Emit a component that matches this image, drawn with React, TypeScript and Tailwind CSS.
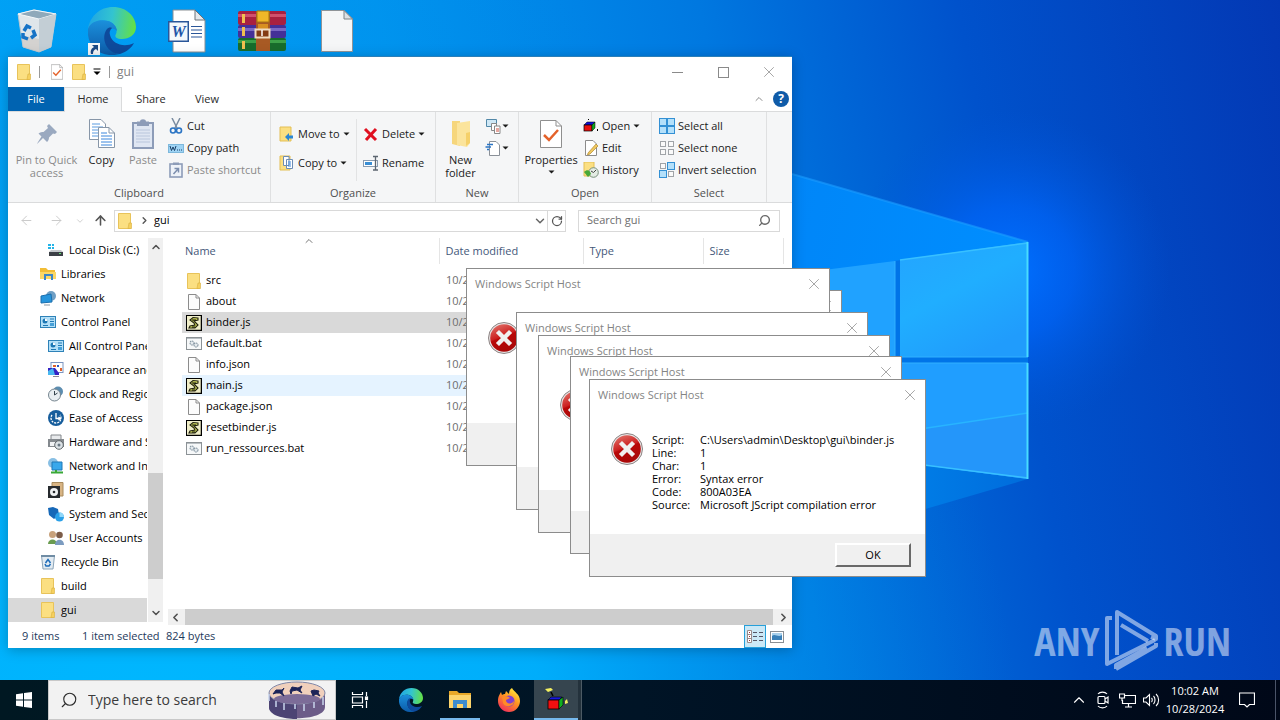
import React from 'react'
import { ArrowLeft, ArrowRight, ArrowUp, ChevronDown, ChevronLeft, ChevronRight, ChevronUp, RotateCw, Search, X } from 'lucide-react'

type IconProps = { className?: string }

/* ---------- wallpaper ---------- */

const Wallpaper = () => (
  <svg
    className="absolute inset-0 h-full w-full"
    viewBox="0 0 1280 680"
    preserveAspectRatio="xMidYMid slice"
    aria-hidden="true"
  >
    <defs>
      <linearGradient id="sky" x1="0" y1="0.1" x2="1" y2="0">
        <stop offset="0" stopColor="#00a6f8" />
        <stop offset="0.3" stopColor="#0096f0" />
        <stop offset="0.55" stopColor="#0078e0" />
        <stop offset="0.75" stopColor="#0052cc" />
        <stop offset="1" stopColor="#0338b4" />
      </linearGradient>
      <radialGradient id="floor" gradientUnits="userSpaceOnUse" cx="160" cy="760" r="860">
        <stop offset="0" stopColor="#00b8ff" />
        <stop offset="0.45" stopColor="#00b0fc" stopOpacity="0.9" />
        <stop offset="1" stopColor="#0080e0" stopOpacity="0" />
      </radialGradient>
      <radialGradient id="glow" gradientUnits="userSpaceOnUse" cx="1010" cy="270" r="160">
        <stop offset="0" stopColor="#0070ff" />
        <stop offset="0.4" stopColor="#0066fa" stopOpacity="0.7" />
        <stop offset="1" stopColor="#0056d8" stopOpacity="0" />
      </radialGradient>
      <linearGradient id="beam" x1="0" y1="0" x2="1" y2="0.3">
        <stop offset="0" stopColor="#0086f8" />
        <stop offset="1" stopColor="#008eff" />
      </linearGradient>
      <linearGradient id="beamLow" x1="0" y1="0" x2="1" y2="0">
        <stop offset="0" stopColor="#0088ec" />
        <stop offset="0.55" stopColor="#007ce6" />
        <stop offset="1" stopColor="#006cdc" />
      </linearGradient>
      <linearGradient id="pane" x1="0" y1="0" x2="0.6" y2="1">
        <stop offset="0" stopColor="#24a4ff" />
        <stop offset="0.5" stopColor="#20aeff" />
        <stop offset="1" stopColor="#209cfc" />
      </linearGradient>
    </defs>
    <rect width="1280" height="680" fill="url(#sky)" />
    <rect width="1280" height="680" fill="url(#floor)" />
    <rect x="820" y="80" width="400" height="400" fill="url(#glow)" />
    <path d="M792 174 L1028 242 V479 L792 445Z" fill="url(#beam)" />
    <path d="M792 548 L1028 479 L792 445Z" fill="url(#beamLow)" />
    <path d="M792 174 L1028 242" stroke="#1c9cff" strokeWidth="2" opacity=".6" />
    <path d="M894 261 V462 L902 463 V260Z M792 357 H1028 V364 H792Z" fill="#0074e8" />
    <path d="M792 274 L895 261 V357 H792Z" fill="#20a2ff" />
    <path d="M900 260 L1028 242 V357 H900Z" fill="url(#pane)" />
    <path d="M792 363 H895 V461 L792 447Z" fill="#209cfc" />
    <path d="M900 363 H1028 V479 L900 462Z" fill="#209eff" />
    <path d="M900 432 L1028 413 V479 L900 462Z" fill="#2496fa" />
    <path d="M900 432 L1028 413" stroke="#28b4ff" strokeWidth="1.5" />
    <path d="M900 260 L1028 243 M900 462 L1028 478" stroke="#38c0ff" strokeWidth="1.5" />
    <path d="M900 357 H1028 M900 363 H1028 M895 261 V357" stroke="#30b0ff" strokeWidth="1" />
    <path d="M1027.500 242 V357 M1027.500 363 V479" stroke="#48dcff" strokeWidth="2" />
  </svg>
)

/* ---------- desktop icons ---------- */

const RecycleBinLarge = () => (
  <svg viewBox="0 0 40 44" className="h-11 w-10">
    <path d="M1 5 L17 1 L39 5 L34 38 L22 43 L6 38Z" fill="#dfe6ea" stroke="#b9c8d2" />
    <path d="M1 5 L17 1 L39 5 L22 10Z" fill="#8fa9ba" stroke="#f4f8fa" />
    <path d="M22 10 L39 5 L34 38 L22 43Z" fill="#c3ced5" />
    <path d="M4 26 L6 38 L22 43 V30Z" fill="#cfc9c4" opacity=".7" />
    <g fill="none" stroke="#1673c6" strokeWidth="3.500">
      <path d="M7 22 L10 17 L14 19" />
      <path d="M16 21 L18 26 L14 29" />
      <path d="M11 30 L6 28 L6 24" />
    </g>
  </svg>
)

const EdgeLogo = ({ className }: IconProps) => (
  <svg viewBox="0 0 48 48" className={className}>
    <defs>
      <linearGradient id="edgeTop" x1="0" y1="0.3" x2="1" y2="0.4">
        <stop offset="0" stopColor="#1fa4e4" />
        <stop offset="0.5" stopColor="#33c4d0" />
        <stop offset="1" stopColor="#64e046" />
      </linearGradient>
      <linearGradient id="edgeLeft" x1="0" y1="0" x2="0" y2="1">
        <stop offset="0" stopColor="#1b90dc" />
        <stop offset="1" stopColor="#0c5aa8" />
      </linearGradient>
    </defs>
    <path d="M0 22 C2 9 12 0 25 0 C39 0 48 10 48 20 C48 28 41 32 34 32 C29 32 26 30 28 27 C30 23 27 16 20 14 C12 12 4 15 0 22Z" fill="url(#edgeTop)" />
    <path d="M0 22 C3 14 12 12 20 14 C25 15 29 20 29 24 C26 20 18 20 17 29 C16 39 24 46 32 47 C14 52 -2 40 0 22Z" fill="url(#edgeLeft)" />
    <path d="M19 22 C12 31 19 47 32 47 C39 45 44 40 46 36 C36 41 24 37 22 28 C21 25 22 23 24 21 C22 20 20 21 19 22Z" fill="#0e4a9c" />
  </svg>
)

const EdgeShortcut = () => (
  <div className="relative">
    <EdgeLogo className="h-12 w-12" />
    <svg viewBox="0 0 12 12" className="absolute bottom-0 left-0 h-3 w-3">
      <rect width="12" height="12" fill="#f4f6f8" />
      <path d="M3 11 C2 7 4 5 6 4 L4 2 H10 V8 L8 6 C6 7 5 8 5 11Z" fill="#1c4a86" />
    </svg>
  </div>
)

const WordDocument = () => (
  <svg viewBox="0 0 38 44" className="h-11 w-[38px]">
    <path d="M5 1 H27 L37 11 V43 H5Z" fill="#fff" stroke="#8a8f94" />
    <path d="M27 1 V11 H37Z" fill="#e4e8ec" stroke="#6b7278" />
    <path d="M23 17.500 H34 M23 21 H34 M23 24.500 H34 M23 28 H34" stroke="#2a5699" strokeWidth="1.2" />
    <rect x="0.750" y="12.750" width="19.500" height="19.500" fill="#f4f8fc" stroke="#2a5699" strokeWidth="1.500" />
    <text x="10.500" y="28" textAnchor="middle" fontSize="16" fontWeight="700" fontStyle="italic" fontFamily="Liberation Serif, serif" fill="#1e55a8">W</text>
  </svg>
)

const WinRar = () => (
  <svg viewBox="0 0 48 42" className="h-[42px] w-12">
    <rect x="0" y="1" width="48" height="14" rx="2" fill="#a82040" />
    <path d="M0 4 H48 V7 H0Z" fill="#d0506c" />
    <rect x="0" y="15" width="48" height="13" rx="2" fill="#443098" />
    <path d="M0 18 H48 V21 H0Z" fill="#7a68c4" />
    <rect x="0" y="28" width="48" height="13" rx="2" fill="#186c2c" />
    <path d="M0 30 H48 V33 H0Z" fill="#3ca048" />
    <path d="M4 4 H7 V13 H4Z M4 17 H7 V26 H4Z M4 31 H7 V39 H4Z" fill="#f0c050" />
    <path d="M18 1 H32 V41 H18Z" fill="#a85a24" />
    <path d="M19 1 H31 V12 H19Z" fill="#f0b828" stroke="#a87410" />
    <path d="M20 14 H30 V20 H20Z" fill="#d89020" />
    <rect x="17.500" y="19.500" width="14" height="8" fill="#843c14" stroke="#f0dcc0" strokeWidth="2" />
    <path d="M24 20 V26" stroke="#fff" strokeWidth="1.500" />
  </svg>
)

const BlankDocument = () => (
  <svg viewBox="0 0 32 42" className="h-[42px] w-8">
    <path d="M0.500 0.500 H23 L31.500 9 V41.500 H0.500Z" fill="#f5f6f7" stroke="#8f9498" />
    <path d="M23 0.500 V9 H31.500Z" fill="#dde1e4" stroke="#7c8286" />
  </svg>
)

/* ---------- small icons ---------- */

const Svg16 = ({ children }: { children: React.ReactNode }) => (
  <svg viewBox="0 0 16 16" className="h-4 w-4 shrink-0" aria-hidden="true">
    {children}
  </svg>
)

const FolderIcon = () => (
  <Svg16>
    <path d="M1.500 0.500 H13.500 V15.500 H1.500Z" fill="#fbdf82" stroke="#e8c35a" />
    <path d="M12 10 H14.500 V15.500 H11Z" fill="#f6d05e" stroke="#d9b041" strokeWidth=".6" />
  </Svg16>
)

const FileIcon = () => (
  <Svg16>
    <path d="M2.500 0.500 H10 L13.500 4 V15.500 H2.500Z" fill="#fcfcfc" stroke="#8c8c8c" />
    <path d="M10 0.500 V4 H13.500" fill="none" stroke="#8c8c8c" />
  </Svg16>
)

const ScriptIcon = () => (
  <Svg16>
    <rect x="0.500" y="0.500" width="15" height="15" fill="#f0eec8" stroke="#000" />
    <path d="M15.500 1 V15.500 H1" fill="none" stroke="#000" strokeWidth="1.500" />
    <path d="M12 3 L7 2.500 L4 5 L8 8 L9 10 L4 11 L3 13 H9 L12 10 L8 6 L12 5Z" fill="#d8e060" stroke="#202010" strokeWidth="1.100" />
    <path d="M6 5 H10 M6 12 H9" stroke="#000" />
  </Svg16>
)

const BatIcon = () => (
  <Svg16>
    <rect x="0.500" y="1.500" width="15" height="12" fill="#f6f8f9" stroke="#8c9296" />
    <path d="M1 2.500 H15" stroke="#b8bec2" />
    <circle cx="6" cy="7" r="2" fill="#e4eaee" stroke="#8798a4" strokeWidth="1.100" strokeDasharray="1.500 .6" />
    <circle cx="10" cy="9" r="2" fill="#e4eaee" stroke="#8798a4" strokeWidth="1.100" strokeDasharray="1.500 .6" />
  </Svg16>
)

const DiskIcon = () => (
  <Svg16>
    <path d="M0 2 H3 V4 H0Z M4 2 H6 V4 H4Z M0 5 H3 V7 H0Z M4 5 H6 V7 H4Z" fill="#22b4e8" />
    <path d="M3 8 H13 L15 10 H1Z" fill="#c4c8cc" />
    <rect x="1" y="10" width="14" height="4" fill="#3c4046" />
    <rect x="11" y="11" width="2" height="1" fill="#5fe070" />
  </Svg16>
)

const LibraryIcon = () => (
  <Svg16>
    <path d="M0 2 H6 L8 4 H15 V13 H0Z" fill="#f2bd35" />
    <path d="M0 6 H16 V13 H0Z" fill="#fbd766" />
    <path d="M4 8 H13 V14 H11 V10 H6 V14 H4Z" fill="#3d86c8" />
  </Svg16>
)

const NetworkIcon = () => (
  <Svg16>
    <circle cx="11" cy="6" r="5" fill="#6f9fc4" />
    <path d="M1 6 L11 4 L12 12 L1 13Z" fill="#2795dc" stroke="#1a6fae" />
    <path d="M4 15 H10" stroke="#8a98a4" />
  </Svg16>
)

const ControlPanelIcon = () => (
  <Svg16>
    <rect x="0.500" y="2.500" width="15" height="11" fill="#b4e0f8" stroke="#2e82b8" />
    <circle cx="5" cy="7" r="2.500" fill="#1e78b4" />
    <path d="M5 7 V4.500 A2.500 2.500 0 0 1 7.500 7Z" fill="#fff" />
    <path d="M10 5 H14 M10 7.500 H14 M3 11.500 H8" stroke="#1e78b4" />
    <rect x="10" y="9" width="4" height="3" fill="#46a0d8" />
  </Svg16>
)

const AppearanceIcon = () => (
  <Svg16>
    <rect x="3" y="0.500" width="12" height="10" fill="#fff" stroke="#7a94c0" />
    <path d="M5 3 H8 V5 H5Z M12 6 H14 V9 H12Z" fill="#e06028" />
    <path d="M9 3 H11 V5 H9Z M5 6 H7 V8 H5Z" fill="#2858c8" />
    <path d="M0 6 H7 L11 11 V13 H0Z" fill="#3424c4" />
    <path d="M0 9 L5 6 L7 13 H0Z" fill="#48b8f0" />
    <path d="M5 14.500 H11" stroke="#889" />
  </Svg16>
)

const ClockIcon = () => (
  <Svg16>
    <circle cx="10" cy="5.500" r="5" fill="#5c8db0" />
    <circle cx="6.500" cy="9" r="6" fill="#e8eef2" stroke="#74848e" />
    <path d="M6.500 5 V9 L9.500 7" fill="none" stroke="#34444e" />
  </Svg16>
)

const EaseIcon = () => (
  <Svg16>
    <circle cx="8" cy="8" r="8" fill="#165d9c" />
    <path d="M4 5 A5 5 0 1 0 12 5" fill="none" stroke="#fff" strokeDasharray="2 1" strokeWidth="1.300" />
    <path d="M8 3 V8.500 H12 M10.500 7 L12.500 8.500 L10.500 10" fill="none" stroke="#fff" strokeWidth="1.300" />
  </Svg16>
)

const HardwareIcon = () => (
  <Svg16>
    <path d="M3 1 H13 V6 H3Z" fill="#e8eaec" stroke="#84888c" />
    <path d="M0 5 H16 V13 H0Z" fill="#84898e" />
    <path d="M2 8 H7 V12 H2Z" fill="#f0f2f4" />
    <circle cx="11" cy="11" r="4.300" fill="#dce2e6" stroke="#62686c" />
    <circle cx="11" cy="11" r="1.500" fill="#6a7884" />
  </Svg16>
)

const NetInternetIcon = () => (
  <Svg16>
    <circle cx="5" cy="5" r="5" fill="#88bfe4" />
    <path d="M4 4 H14 V12 H4Z" fill="#38a8ec" stroke="#1e78b8" />
    <path d="M8 12 V14 M3 14.500 H15" stroke="#38a838" strokeWidth="2" />
  </Svg16>
)

const ProgramsIcon = () => (
  <Svg16>
    <path d="M4 0.500 H15 V14 H4Z" fill="#d8b484" stroke="#a88a5c" />
    <rect x="0" y="4" width="12" height="12" fill="#262a2e" />
    <circle cx="6" cy="10" r="4" fill="#f0f2f4" />
    <circle cx="6" cy="10" r="1.300" fill="#262a2e" />
  </Svg16>
)

const SystemIcon = () => (
  <Svg16>
    <path d="M0 2 L5 1 L10 3 L11 9 L6 13 L1 9Z" fill="#1668b8" />
    <circle cx="11.500" cy="11" r="4.500" fill="#2aa0e8" />
    <path d="M11.500 11 V6.500 A4.500 4.500 0 0 1 16 11Z" fill="#90d8fa" />
  </Svg16>
)

const UsersIcon = () => (
  <Svg16>
    <circle cx="4.500" cy="4.500" r="3.500" fill="#c8a27c" />
    <circle cx="11.500" cy="5" r="3.300" fill="#7c5c48" />
    <path d="M0 14 C0 8 9 8 9 14Z" fill="#6a9c50" />
    <path d="M7 15 C7 8 16 8 16 15Z" fill="#7c9cc0" />
  </Svg16>
)

const BinIcon = () => (
  <Svg16>
    <path d="M1.500 1.500 H14.500 L13 15 H3Z" fill="#e2ebf2" stroke="#8ba4b8" />
    <path d="M1 2 H15" stroke="#6f8ca4" strokeWidth="2" />
    <path d="M5.500 9 L8 5.500 L10.500 9 M10.500 10 L9 12 H6 L5 10" fill="none" stroke="#1e6cb8" strokeWidth="1.500" />
  </Svg16>
)

const CheckPage = ({ className }: IconProps) => (
  <svg viewBox="0 0 22 28" className={className} aria-hidden="true">
    <path d="M0.500 0.500 H16 L21.500 6 V27.500 H0.500Z" fill="#fff" stroke="#8f8f8f" />
    <path d="M16 0.500 V6 H21.500" fill="none" stroke="#8f8f8f" />
    <path d="M4 15 L9 20 L18 10" fill="none" stroke="#e4622a" strokeWidth="2.500" />
  </svg>
)

const PinIcon = () => (
  <svg viewBox="0 0 24 24" className="h-6 w-6" aria-hidden="true">
    <path d="M14 2 L22 10 L20 12 L18 11.500 L14 15.500 C14 18 13 19 12 20 L8 16 L2 22 L3 20 L6.500 14.500 L3.500 11.500 C5 10 7 10 8.500 10 L13 6 L12 4Z" fill="#9aa9c0" />
  </svg>
)

const CopyIcon = () => (
  <svg viewBox="0 0 26 30" className="h-[30px] w-[26px]" aria-hidden="true">
    <path d="M0.500 0.500 H12 L16.500 5 V20.500 H0.500Z" fill="#fff" stroke="#8796a8" />
    <path d="M3 5 H11 M3 8 H14 M3 11 H14 M3 14 H14 M3 17 H14" stroke="#5b9be0" />
    <path d="M9.500 8.500 H20 L25.500 14 V28.500 H9.500Z" fill="#fff" stroke="#8796a8" />
    <path d="M20 8.500 V14 H25.500" fill="none" stroke="#8796a8" />
    <path d="M12 14 H18 M12 17 H23 M12 20 H23 M12 23 H23 M12 26 H23" stroke="#3a86dc" />
  </svg>
)

const PasteIcon = () => (
  <svg viewBox="0 0 22 30" className="h-[30px] w-[22px]" aria-hidden="true">
    <rect x="1" y="4" width="20" height="25" fill="#dfe6f2" stroke="#8d9cb8" strokeWidth="2" />
    <path d="M5 2.500 H8 C8 -0.500 14 -0.500 14 2.500 H17 V7 H5Z" fill="#8d9cb8" />
    <path d="M4 11 H18 M4 14 H18 M4 17 H18 M4 20 H18 M4 23 H18" stroke="#b9c6dc" />
  </svg>
)

const NewFolderIcon = () => (
  <svg viewBox="0 0 20 28" className="h-7 w-5" aria-hidden="true">
    <path d="M1 1 H9 V26 L1 24Z" fill="#f6d67c" />
    <path d="M6 3 L19 1 V23 L16 27 L6 25Z" fill="#fbe49c" />
    <path d="M15 13 L19 12 V23 L15 26Z" fill="#f5d06a" />
  </svg>
)

const CutIcon = () => (
  <Svg16>
    <path d="M4 0 L9.500 11 M12 0 L6.500 11" stroke="#7a8ca0" strokeWidth="1.500" />
    <circle cx="5" cy="12.500" r="2.500" fill="none" stroke="#2a74c4" strokeWidth="1.600" />
    <circle cx="11" cy="12.500" r="2.500" fill="none" stroke="#2a74c4" strokeWidth="1.600" />
  </Svg16>
)

const CopyPathIcon = () => (
  <Svg16>
    <rect x="0.500" y="4.500" width="15" height="8" fill="#9ed3f4" stroke="#7db8dc" />
    <path d="M2 6 L3.500 10.500 L5 7 L6.500 10.500 L8 6" fill="none" stroke="#1a3f66" />
    <path d="M9 10 H10 M11 10 H12 M13 10 H14" stroke="#1a3f66" />
  </Svg16>
)

const PasteShortcutIcon = () => (
  <Svg16>
    <rect x="2" y="2" width="12" height="13" fill="#eef2f8" stroke="#8d9cb8" strokeWidth="1.600" />
    <path d="M5 0.500 H11 V3 H5Z" fill="#8d9cb8" />
    <path d="M5.500 12 L10 7 M6.500 6.500 H10.500 V10.500" fill="none" stroke="#7c8eae" strokeWidth="1.500" />
  </Svg16>
)

const MoveToIcon = () => (
  <Svg16>
    <path d="M1 1 H12 V15 H1Z" fill="#fbdf82" stroke="#e3bf55" />
    <path d="M6 11 L10 7 V9.500 H14 V12.500 H10 V15Z" fill="#2a86d4" />
  </Svg16>
)

const CopyToIcon = () => (
  <Svg16>
    <path d="M1 1 H11 V15 H1Z" fill="#fbdf82" stroke="#e3bf55" />
    <path d="M4.500 1.500 H10 V10.500 H4.500Z M7.500 4.500 H13.500 V13.500 H7.500Z" fill="#fff" stroke="#6c8cb4" />
    <path d="M9 7 H12 M9 9 H12 M9 11 H12" stroke="#3a86dc" />
  </Svg16>
)

const DeleteIcon = () => (
  <Svg16>
    <path d="M2 3 L13 14 M13 3 L3 14" stroke="#e01020" strokeWidth="3" />
  </Svg16>
)

const RenameIcon = () => (
  <Svg16>
    <rect x="0.500" y="5.500" width="14" height="6" fill="#fff" stroke="#8a9cb0" />
    <rect x="2" y="7" width="7" height="3" fill="#3a8ed4" />
    <path d="M10 1.500 H15 M10 15 H15 M12.500 2 V15" stroke="#5c6670" strokeWidth="1.300" />
  </Svg16>
)

const NewItemIcon = () => (
  <Svg16>
    <path d="M1.500 1.500 H11.500 V8.500 H1.500Z" fill="#cfe8f6" stroke="#5288a8" />
    <path d="M6.500 5.500 H11.500 V12.500 H6.500Z" fill="#fff" stroke="#888" />
    <path d="M9.500 8 H15 V15.500 H9.500Z" fill="#fff" stroke="#888" />
    <path d="M11 11 H14 M11 13 H14" stroke="#d05040" />
  </Svg16>
)

const EasyAccessIcon = () => (
  <Svg16>
    <path d="M4.500 1.500 H11 L14.500 5 V15.500 H4.500Z" fill="#fff" stroke="#8a9098" />
    <path d="M2 4.500 H8 M0.500 7 H6 M2 9.500 H4" stroke="#2a74c4" strokeWidth="1.400" />
  </Svg16>
)

const BlocksIcon = ({ className }: IconProps) => (
  <svg viewBox="0 0 16 16" className={className} aria-hidden="true">
    <path d="M1 7 L4 4 H12 L9 7Z" fill="#1010d8" stroke="#000" strokeWidth=".5" />
    <rect x="1" y="7" width="8" height="6" fill="#e81010" stroke="#000" strokeWidth=".7" />
    <path d="M9 7 L12 4 V10 L9 13Z" fill="#10a820" stroke="#000" strokeWidth=".5" />
    <path d="M5 1 H6 V2 H5Z M14 11 H15 V13 H14Z" fill="#000" />
  </svg>
)

const EditIcon = () => (
  <Svg16>
    <path d="M2.500 0.500 H10 L13.500 4 V15.500 H2.500Z" fill="#fff" stroke="#8c8c8c" />
    <path d="M5 13 L13 4 L15 6 L7 14 L4.500 15Z" fill="#f0c860" stroke="#b08a30" strokeWidth=".7" />
  </Svg16>
)

const HistoryIcon = () => (
  <Svg16>
    <path d="M1 0 H11 V14 H1Z" fill="#fbdf82" stroke="#e3bf55" />
    <circle cx="10.500" cy="10.500" r="4.800" fill="#e4ece4" stroke="#78907c" />
    <path d="M1 10 C4 7 7 8 8 12 L5 15Z" fill="#48a838" />
    <path d="M10.500 10.500 L13 8 M10.500 10.500 L8 9" stroke="#444" />
  </Svg16>
)

/* four little squares, the filled ones are given as "1" */
const SquaresIcon = ({ on }: { on: string }) => (
  <Svg16>
    {[0, 1, 2, 3].map((i) => (
      <rect
        key={i}
        x={(i % 2) * 8 + (on[i] === '1' ? 0.5 : 1.5)}
        y={Math.floor(i / 2) * 8 + (on[i] === '1' ? 0.5 : 1.5)}
        width={on[i] === '1' ? 7 : 5}
        height={on[i] === '1' ? 7 : 5}
        fill={on[i] === '1' ? '#b4e0fa' : '#fafafa'}
        stroke={on[i] === '1' ? '#3390d4' : '#a0a4a8'}
      />
    ))}
  </Svg16>
)

const Caret = ({ className = '' }: IconProps) => (
  <svg viewBox="0 0 7 4" className={`h-1 w-[7px] shrink-0 ${className}`} aria-hidden="true">
    <path d="M0.500 0.500 H6.500 L3.500 3.500Z" fill="#1b1b1b" />
  </svg>
)

/* ---------- ribbon ---------- */

const RibbonGroup = ({ label, className, children }: { label: string; className: string; children: React.ReactNode }) => (
  <section className={`flex shrink-0 flex-col border-r border-[#dfe0e1] ${className}`}>
    <div className="flex h-[73px] pt-[3px]">{children}</div>
    <h3 className="text-center text-[11px] leading-4 text-[#505050]">{label}</h3>
  </section>
)

interface SmallButtonProps {
  icon: React.ReactNode
  label?: string
  caret?: boolean
  disabled?: boolean
}

const SmallButton = ({ icon, label, caret, disabled }: SmallButtonProps) => (
  <button
    type="button"
    disabled={disabled}
    aria-label={label ?? 'New item'}
    className="flex h-[22px] items-center gap-[3px] whitespace-nowrap text-[11px] text-[#1b1b1b] disabled:text-[#8a8a8a]"
  >
    {icon}
    {label}
    {caret && <Caret className={label ? '' : '-ml-0.5'} />}
  </button>
)

interface BigButtonProps {
  icon: React.ReactNode
  lines: string[]
  caret?: boolean
  disabled?: boolean
  className: string
}

const BigButton = ({ icon, lines, caret, disabled, className }: BigButtonProps) => (
  <button
    type="button"
    disabled={disabled}
    className={`flex shrink-0 flex-col items-center text-[11px] leading-[13px] text-[#1b1b1b] disabled:text-[#8a8a8a] ${className}`}
  >
    <span className="flex h-[38px] items-center">{icon}</span>
    {lines.map((line) => (
      <span key={line} className="whitespace-nowrap">{line}</span>
    ))}
    {caret && <Caret className="mt-1" />}
  </button>
)

const Ribbon = () => (
  <div className="flex h-[92px] border-y border-[#dadbdc] bg-[#f5f6f7]">
    <RibbonGroup label="Clipboard" className="w-[263px]">
      <BigButton icon={<PinIcon />} lines={['Pin to Quick', 'access']} disabled className="w-[77px]" />
      <BigButton icon={<CopyIcon />} lines={['Copy']} className="w-[33px]" />
      <BigButton icon={<PasteIcon />} lines={['Paste']} disabled className="w-[50px]" />
      <div>
        <SmallButton icon={<CutIcon />} label="Cut" />
        <SmallButton icon={<CopyPathIcon />} label="Copy path" />
        <SmallButton icon={<PasteShortcutIcon />} label="Paste shortcut" disabled />
      </div>
    </RibbonGroup>
    <RibbonGroup label="Organize" className="w-[165px]">
      <div className="flex w-[85px] flex-col gap-[7px] py-2 pl-2">
        <SmallButton icon={<MoveToIcon />} label="Move to" caret />
        <SmallButton icon={<CopyToIcon />} label="Copy to" caret />
      </div>
      <div className="my-1 flex flex-col gap-[7px] border-l border-[#e2e3e4] py-1 pl-1.5">
        <SmallButton icon={<DeleteIcon />} label="Delete" caret />
        <SmallButton icon={<RenameIcon />} label="Rename" />
      </div>
    </RibbonGroup>
    <RibbonGroup label="New" className="w-[83px]">
      <BigButton icon={<NewFolderIcon />} lines={['New', 'folder']} className="w-[49px]" />
      <div>
        <SmallButton icon={<NewItemIcon />} caret />
        <SmallButton icon={<EasyAccessIcon />} caret />
      </div>
    </RibbonGroup>
    <RibbonGroup label="Open" className="w-[133px]">
      <BigButton icon={<CheckPage className="h-7 w-[22px]" />} lines={['Properties']} caret className="w-16" />
      <div>
        <SmallButton icon={<BlocksIcon className="h-4 w-4" />} label="Open" caret />
        <SmallButton icon={<EditIcon />} label="Edit" />
        <SmallButton icon={<HistoryIcon />} label="History" />
      </div>
    </RibbonGroup>
    <RibbonGroup label="Select" className="w-[115px]">
      <div className="pl-[7px]">
        <SmallButton icon={<SquaresIcon on="1111" />} label="Select all" />
        <SmallButton icon={<SquaresIcon on="0000" />} label="Select none" />
        <SmallButton icon={<SquaresIcon on="0110" />} label="Invert selection" />
      </div>
    </RibbonGroup>
  </div>
)

/* ---------- explorer ---------- */

const treeItems = [
  { label: 'Local Disk (C:)', Icon: DiskIcon, deep: true },
  { label: 'Libraries', Icon: LibraryIcon },
  { label: 'Network', Icon: NetworkIcon },
  { label: 'Control Panel', Icon: ControlPanelIcon },
  { label: 'All Control Panel Items', Icon: ControlPanelIcon, deep: true },
  { label: 'Appearance and Personalization', Icon: AppearanceIcon, deep: true },
  { label: 'Clock and Region', Icon: ClockIcon, deep: true },
  { label: 'Ease of Access', Icon: EaseIcon, deep: true },
  { label: 'Hardware and Sound', Icon: HardwareIcon, deep: true },
  { label: 'Network and Internet', Icon: NetInternetIcon, deep: true },
  { label: 'Programs', Icon: ProgramsIcon, deep: true },
  { label: 'System and Security', Icon: SystemIcon, deep: true },
  { label: 'User Accounts', Icon: UsersIcon, deep: true },
  { label: 'Recycle Bin', Icon: BinIcon },
  { label: 'build', Icon: FolderIcon },
  { label: 'gui', Icon: FolderIcon, selected: true }
]

const files = [
  { name: 'src', Icon: FolderIcon },
  { name: 'about', Icon: FileIcon },
  { name: 'binder.js', Icon: ScriptIcon, row: 'bg-[#d9d9d9]' },
  { name: 'default.bat', Icon: BatIcon },
  { name: 'info.json', Icon: FileIcon },
  { name: 'main.js', Icon: ScriptIcon, row: 'bg-[#e5f3ff]' },
  { name: 'package.json', Icon: FileIcon },
  { name: 'resetbinder.js', Icon: ScriptIcon },
  { name: 'run_ressources.bat', Icon: BatIcon }
]

const TitleBar = () => (
  <header className="flex h-[30px] items-center pl-2">
    <FolderIcon />
    <span className="ml-[7px] h-3 w-px bg-[#9a9a9a]" />
    <CheckPage className="ml-[11px] h-4 w-3" />
    <span className="ml-2"><FolderIcon /></span>
    <svg viewBox="0 0 8 8" className="ml-1.5 h-2 w-2" aria-hidden="true">
      <path d="M0.500 1 H7.500" stroke="#000" />
      <path d="M0.500 3.500 H7.500 L4 7Z" fill="#000" />
    </svg>
    <span className="ml-2 h-3 w-px bg-[#9a9a9a]" />
    <h1 className="ml-[7px] text-xs text-[#808080]">gui</h1>
    <div className="ml-auto flex text-[#8a8a8a]">
      <button type="button" aria-label="Minimize" className="flex h-7 w-[46px] items-center justify-center">
        <span className="h-px w-[11px] bg-[#8a8a8a]" />
      </button>
      <button type="button" aria-label="Maximize" className="flex h-7 w-[46px] items-center justify-center">
        <span className="h-[11px] w-[11px] border border-[#8a8a8a]" />
      </button>
      <button type="button" aria-label="Close" className="flex h-7 w-[46px] items-center justify-center">
        <X size={18} strokeWidth={1} />
      </button>
    </div>
  </header>
)

const TabBar = () => (
  <nav className="flex h-6 text-[11px] text-[#2b2b2b]">
    <button type="button" className="w-14 bg-[#0063b1] text-white">File</button>
    <button type="button" className="relative -mb-px w-[58px] border border-b-0 border-[#dadbdc] bg-[#f5f6f7] pb-px">Home</button>
    <button type="button" className="w-[58px]">Share</button>
    <button type="button" className="w-[54px]">View</button>
    <button type="button" aria-label="Collapse the ribbon" className="ml-auto flex w-7 items-center justify-center text-[#8a8a8a]">
      <ChevronUp size={12} />
    </button>
    <button type="button" aria-label="Help" className="mr-[3px] flex items-center">
      <span className="flex h-4 w-4 items-center justify-center rounded-full bg-[#0f5ba8] text-xs font-bold text-white">?</span>
    </button>
  </nav>
)

const AddressBar = () => (
  <div className="flex h-[35px] items-center pr-3 text-[11px]">
    <button type="button" aria-label="Back" disabled className="ml-[11px] text-[#c8c8c8]"><ArrowLeft size={15} strokeWidth={1.5} /></button>
    <button type="button" aria-label="Forward" disabled className="ml-[15px] text-[#c8c8c8]"><ArrowRight size={15} strokeWidth={1.5} /></button>
    <button type="button" aria-label="Recent locations" className="ml-[11px] text-[#c8c8c8]"><ChevronDown size={10} /></button>
    <button type="button" aria-label="Up" className="ml-2 text-[#555]"><ArrowUp size={15} strokeWidth={2.5} /></button>
    <div className="ml-1.5 flex h-[22px] flex-1 items-center border border-[#d9d9d9] bg-white pl-0.5">
      <FolderIcon />
      <ChevronRight size={11} strokeWidth={3} className="ml-1.5 text-[#555]" />
      <a href="#gui" className="ml-1 text-black">gui</a>
      <button type="button" aria-label="Previous locations" className="ml-auto text-[#666]"><ChevronDown size={14} strokeWidth={2.5} /></button>
      <button type="button" aria-label="Refresh" className="flex h-full w-[18px] items-center justify-center border-l border-[#d9d9d9] text-[#555]">
        <RotateCw size={12} strokeWidth={2.5} />
      </button>
    </div>
    <div className="ml-3 flex h-[22px] w-[202px] items-center border border-[#d9d9d9] px-2">
      <input type="text" aria-label="Search gui" placeholder="Search gui" className="min-w-0 flex-1 bg-transparent outline-none placeholder:text-[#6d6d6d]" />
      <Search size={13} strokeWidth={2.5} className="-scale-x-100 text-[#666]" />
    </div>
  </div>
)

const Tree = () => (
  <aside className="flex w-[155px] shrink-0 pb-[3px]">
    <ul className="min-w-0 flex-1">
      {treeItems.map(({ label, Icon, deep, selected }) => (
        <li key={label} className={selected ? 'bg-[#d9d9d9]' : ''}>
          <a href="#" className={`flex h-6 items-center gap-[5px] overflow-hidden whitespace-nowrap text-[11px] text-black ${deep ? 'pl-10' : 'pl-8'}`}>
            <Icon />
            {label}
          </a>
        </li>
      ))}
    </ul>
    <div className="flex w-4 flex-col items-center border-l border-white bg-[#f0f0f0] py-[3px] text-[#505050]">
      <ChevronUp size={12} strokeWidth={3} />
      <div className="mt-auto h-[106px] w-full bg-[#cdcdcd]" />
      <ChevronDown size={12} strokeWidth={3} className="mt-[28px]" />
    </div>
  </aside>
)

const FileTable = () => (
  <table className="w-full table-fixed border-collapse text-[11px]">
    <colgroup>
      <col className="w-[257px]" />
      <col className="w-36" />
      <col className="w-[120px]" />
      <col />
    </colgroup>
    <thead>
      <tr className="h-[26px] text-left text-[#44587a]">
        <th className="relative border-r border-[#e5e5e5] pl-[3px] font-normal">
          Name
          <ChevronUp size={12} className="absolute left-[121px] top-[-3px] text-[#777]" />
        </th>
        <th className="border-r border-[#e5e5e5] pl-1.5 font-normal">Date modified</th>
        <th className="border-r border-[#e5e5e5] pl-1.5 font-normal">Type</th>
        <th className="border-r border-[#e5e5e5] pl-1.5 font-normal">Size</th>
      </tr>
      <tr className="h-1.5" />
    </thead>
    <tbody>
      {files.map(({ name, Icon, row }) => (
        <tr key={name} className={`h-[21px] ${row ?? ''}`}>
          <td className="p-0 pl-1">
            <div className="flex items-center gap-1 text-black">
              <Icon />
              {name}
            </div>
          </td>
          <td className="p-0 pl-[7px] text-[#6d6d6d]">10/28/2024</td>
          <td />
          <td />
        </tr>
      ))}
    </tbody>
  </table>
)

const Explorer = () => (
  <section aria-label="gui" className="absolute left-2 top-14 w-[784px] border-t border-[#2b7fb8] bg-white shadow-[0_2px_12px_rgba(0,0,0,0.25)]">
    <TitleBar />
    <TabBar />
    <Ribbon />
    <AddressBar />
    <div className="flex">
      <Tree />
      <div className="flex min-w-0 flex-1 flex-col pl-[5px]">
        <div className="pl-[14px] pr-2">
          <FileTable />
        </div>
        <div className="mt-auto flex h-4 items-center bg-[#f0f0f0] text-[#505050]">
          <ChevronLeft size={13} strokeWidth={3} className="ml-px mr-[3px]" />
          <div className="h-full flex-1 bg-[#cdcdcd]" />
          <ChevronRight size={13} strokeWidth={3} className="ml-1 mr-0.5" />
        </div>
      </div>
    </div>
    <footer className="flex h-[23px] items-center pl-[14px] pr-2 text-[11px] text-[#1e395b]">
      <span className="w-[60px]">9 items</span>
      <span className="w-[84px]">1 item selected</span>
      <span>824 bytes</span>
      <button type="button" aria-label="Details view" className="ml-auto border border-[#26a0da] bg-[#cbe8f6] px-0.5 py-[3px]">
        <svg viewBox="0 0 16 15" className="h-[15px] w-4">
          <path d="M0.500 1.500 H4.500 V13.500 H0.500Z M0.500 5.500 H4.500 M0.500 9.500 H4.500" fill="#fff" stroke="#9a8a8a" />
          <path d="M2.500 3 V4 M2.500 7 V8 M2.500 11 V12" stroke="#a03030" />
          <path d="M6 3.500 H10 M12 3.500 H16 M6 7.500 H10 M12 7.500 H16 M6 11.500 H10 M12 11.500 H16" stroke="#556" />
        </svg>
      </button>
      <button type="button" aria-label="Large icons view" className="ml-1">
        <svg viewBox="0 0 14 12" className="h-3 w-[14px]">
          <rect x="0.500" y="0.500" width="13" height="11" fill="#fff" stroke="#8a8f94" />
          <rect x="2" y="2" width="10" height="7" fill="#3a80b8" />
          <path d="M2 5 C5 2 8 7 12 4 V2 H2Z" fill="#a8d0ec" />
        </svg>
      </button>
    </footer>
  </section>
)

/* ---------- script host dialogs ---------- */

const details = [
  ['Script:', 'C:\\Users\\admin\\Desktop\\gui\\binder.js'],
  ['Line:', '1'],
  ['Char:', '1'],
  ['Error:', 'Syntax error'],
  ['Code:', '800A03EA'],
  ['Source:', 'Microsoft JScript compilation error']
]

const ErrorIcon = () => (
  <svg viewBox="0 0 32 32" className="h-8 w-8 shrink-0" aria-hidden="true">
    <defs>
      <linearGradient id="err" x1="0.2" y1="0" x2="0.6" y2="1">
        <stop offset="0" stopColor="#e07068" />
        <stop offset="0.45" stopColor="#cc2020" />
        <stop offset="0.5" stopColor="#b80808" />
        <stop offset="1" stopColor="#a80808" />
      </linearGradient>
    </defs>
    <circle cx="16" cy="16" r="15.500" fill="#e8e4e4" stroke="#8c8484" />
    <circle cx="16" cy="16" r="13.800" fill="url(#err)" />
    <path d="M11 11 L21 21 M21 11 L11 21" stroke="#f0f0f0" strokeWidth="4.400" strokeLinecap="square" />
  </svg>
)

interface ScriptDialogProps {
  place: string
  title?: string
  active?: boolean
}

const ScriptDialog = ({ place, title = 'Windows Script Host', active }: ScriptDialogProps) => (
  <section role="dialog" aria-label="Windows Script Host" className={`absolute border border-[#8c8c8c] bg-white ${place}`}>
    <header className="flex h-[30px] items-center pl-2 pr-1.5">
      <h2 className="text-[11px] text-[#848484]">{title}</h2>
      <button type="button" aria-label="Close" className="ml-auto text-[#8a8a8a]">
        <X size={18} strokeWidth={1} />
      </button>
    </header>
    <div className="flex h-[124px] items-start overflow-hidden pl-[21px]">
      <div className="pt-[23px]">
        <ErrorIcon />
      </div>
      {active && (
        <dl className="grid grid-cols-[48px_1fr] pl-[9px] pt-[23px] text-[11px] leading-[13px] text-black">
          {details.map(([term, value]) => (
            <React.Fragment key={term}>
              <dt>{term}</dt>
              <dd className="whitespace-nowrap">{value}</dd>
            </React.Fragment>
          ))}
        </dl>
      )}
    </div>
    <footer className="flex h-[42px] items-center justify-end bg-[#f0f0f0] pb-px pr-[14px]">
      {active && (
        <button type="button" className="h-6 w-[76px] border-2 border-b-[#696969] border-l-white border-r-[#696969] border-t-white bg-[#f0f0f0] text-[11px] leading-4 text-black">
          OK
        </button>
      )}
    </footer>
  </section>
)

/* ---------- watermark ---------- */

const Watermark = () => (
  <div className="absolute bottom-2 right-[49px] flex items-center text-[40px] leading-none text-white/50 [font-family:'Open_Sans_Condensed','Liberation_Sans_Narrow',sans-serif]">
    <span>ANY</span>
    <svg viewBox="0 0 54 62" className="ml-1.5 mr-1 h-[62px] w-[54px]" aria-hidden="true">
      <g fill="none" stroke="currentColor" strokeWidth="4" strokeLinejoin="round">
        <path d="M7 8 H2 V54 L50 30" />
        <path d="M12 45 V2 L51 26 V29 L46 27" />
        <path d="M16 15 L43 31 M11 59 L51 36 V33 M11 59 L11 55 L42 38" />
      </g>
    </svg>
    <span>RUN</span>
  </div>
)

/* ---------- taskbar ---------- */

const SearchArt = () => (
  <svg viewBox="0 0 58 38" className="h-[38px] w-[58px]" aria-hidden="true">
    <path d="M1 12 V26 C1 41 57 41 57 26 V12Z" fill="#6c5c88" />
    <path d="M1 14 V26 C1 36 20 38 29 38 V22Z" fill="#4c4474" />
    <ellipse cx="29" cy="12" rx="28" ry="11" fill="#f0d0bc" stroke="#8088a8" />
    <ellipse cx="29" cy="18" rx="23" ry="5" fill="#7c6c98" />
    <path d="M1 13 V20 M8 20 V26 M16 22 V29 M27 23 V28 M36 23 V30 M46 21 V27 M55 16 V24" stroke="#c8d4ec" strokeWidth="1.500" />
    <path d="M5 13 L8 9 L14 9 L16 7 L14 11 L16 15 L12 12 L8 12Z M22 10 L24 6 L30 7 L34 5 L32 9 L34 12 L29 9 L24 10 L23 13Z M43 10 L46 9 L51 10 L50 12 L52 15 L48 13 L45 15Z" fill="#1c2458" stroke="#1c2458" />
  </svg>
)

const FolderTask = () => (
  <svg viewBox="0 0 22 20" className="h-5 w-[22px]" aria-hidden="true">
    <path d="M0 2 H8 L10 4 H22 V19 H0Z" fill="#e8a828" />
    <path d="M0 6 H22 V19 H0Z" fill="#fcd46c" />
    <path d="M4 11 H18 V19 H14 V15 H8 V19 H4Z" fill="#3c8cd0" />
  </svg>
)

const FirefoxTask = () => (
  <svg viewBox="0 0 24 24" className="h-6 w-6" aria-hidden="true">
    <defs>
      <linearGradient id="fox" x1="0.8" y1="0" x2="0.2" y2="1">
        <stop offset="0" stopColor="#fff040" />
        <stop offset="0.45" stopColor="#ff9420" />
        <stop offset="1" stopColor="#f02860" />
      </linearGradient>
    </defs>
    <path d="M1 13 C1 8 3 6 4 4 L5 7 C6 6 7 6 8 6 L9 3 L12 6 C12 3 13 1 15 0 C17 4 23 6 23 13 A11 11 0 0 1 1 13Z" fill="url(#fox)" />
    <circle cx="12" cy="13" r="5.500" fill="#8040d0" />
    <path d="M5 9 C8 8 11 8 13 10 L9 12 C9 16 14 17 17 13 C17 19 8 20 6 15Z" fill="#ff8a28" />
  </svg>
)

const TaskButton = ({ label, className = '', children }: { label: string; className?: string; children: React.ReactNode }) => (
  <button type="button" aria-label={label} className={`flex items-center justify-center ${className}`}>
    {children}
  </button>
)

const Taskbar = () => (
  <footer className="flex h-10 shrink-0 bg-linear-to-r from-[#001822] via-[#001426] to-[#000818] text-white">
    <TaskButton label="Start" className="w-12">
      <svg viewBox="0 0 16 16" className="h-4 w-4">
        <path d="M0 2.200 L7 1.200 V7.500 H0Z M8 1 L16 0 V7.500 H8Z M0 8.500 H7 V14.800 L0 13.800Z M8 8.500 H16 V16 L8 15Z" fill="#fff" />
      </svg>
    </TaskButton>
    <label className="flex w-72 items-center border border-[#c8c8c8] bg-[#f2f2f2] pl-[11px] pr-[9px] text-[#2b2b2b]">
      <Search size={18} strokeWidth={1.5} className="-scale-x-100" />
      <input type="text" aria-label="Type here to search" placeholder="Type here to search" className="ml-2.5 min-w-0 flex-1 bg-transparent text-sm outline-none placeholder:text-[#3b3b3b]" />
      <SearchArt />
    </label>
    <TaskButton label="Task view" className="w-12">
      <svg viewBox="0 0 18 18" className="h-[18px] w-[18px]" fill="none" stroke="#fff" strokeWidth="1.200">
        <path d="M1.500 1 V3.500 H11.500 V1 M1.500 17 V14.500 H11.500 V17 M1.500 6 H11.500 V12 H1.500Z M15.500 1 V5 M15.500 10 V17" />
        <rect x="14.500" y="6" width="2" height="2.500" fill="#fff" />
      </svg>
    </TaskButton>
    <TaskButton label="Edge" className="ml-0.5 w-[50px]">
      <EdgeLogo className="h-6 w-6" />
    </TaskButton>
    <TaskButton label="File Explorer" className="ml-1 w-10 border-b-2 border-[#76b9ed]">
      <FolderTask />
    </TaskButton>
    <TaskButton label="Firefox" className="ml-1 w-[50px]">
      <FirefoxTask />
    </TaskButton>
    <TaskButton label="Windows Script Host" className="w-11 border-b-2 border-[#76b9ed] bg-[#36454f]">
      <svg viewBox="0 0 26 24" className="h-6 w-[26px]">
        <path d="M2 2 L8 1 L10 3 L5 5Z M22 14 L24 12 L25 16 L22 17Z" fill="#f4f060" />
        <path d="M8 5 L10 9" stroke="#000" strokeWidth="1.500" />
        <path d="M5 13 L8 10 H19 L16 13Z" fill="#1818e0" stroke="#000" strokeWidth=".6" />
        <rect x="5" y="13" width="11" height="9" fill="#f01010" stroke="#000" strokeWidth=".8" />
        <path d="M16 13 L20 10 V18 L16 22Z" fill="#10b020" stroke="#000" strokeWidth=".6" />
      </svg>
    </TaskButton>
    <span className="w-1 border-r border-[#4c5a64] bg-[#24323c]" />
    <div className="ml-auto flex items-center">
      <TaskButton label="Show hidden icons" className="w-6"><ChevronUp size={18} strokeWidth={1.5} /></TaskButton>
      <TaskButton label="Meet now" className="w-6">
        <svg viewBox="0 0 16 18" className="h-[18px] w-4" fill="none" stroke="#fff" strokeWidth="1.200">
          <path d="M3 3 C5 0.500 10 0.500 12 3 M3 15 C5 17.500 10 17.500 12 15 M10 8 L13 6 V12 L10 10" />
          <rect x="3" y="5.500" width="7" height="7" rx="1" />
        </svg>
      </TaskButton>
      <TaskButton label="Network" className="w-6">
        <svg viewBox="0 0 17 15" className="h-[15px] w-[17px]" fill="none" stroke="#fff" strokeWidth="1.200">
          <path d="M6 2.500 H16.500 V10.500 H3.500 V7 M9.500 10.500 V14 M6 14 H13 M0.500 1 H5.500 V5 H0.500Z M3 5 V8" />
        </svg>
      </TaskButton>
      <TaskButton label="Volume" className="w-6">
        <svg viewBox="0 0 17 14" className="h-[14px] w-[17px]" fill="none" stroke="#fff" strokeWidth="1.100">
          <path d="M0.500 5 H3 L6.500 1.500 V12.500 L3 9 H0.500Z M8.500 5 C9.500 6 9.500 8 8.500 9 M10.500 3 C12.500 5 12.500 9 10.500 11 M13 1 C16.500 4 16.500 10 13 13" />
        </svg>
      </TaskButton>
      <time className="w-16 text-center text-[11px] leading-[18px]">
        10:02 AM
        <br />
        10/28/2024
      </time>
      <TaskButton label="Notifications" className="w-10">
        <svg viewBox="0 0 16 16" className="h-4 w-4" fill="none" stroke="#fff" strokeWidth="1.200">
          <path d="M0.500 1 H15.500 V12.500 H10.500 L8 15 L5.500 12.500 H0.500Z" />
        </svg>
      </TaskButton>
      <span className="ml-2 mr-1 h-10 w-px bg-[#4a5468]" />
    </div>
  </footer>
)

const desktopIcons = [RecycleBinLarge, EdgeShortcut, WordDocument, WinRar, BlankDocument]

export default function App() {
  return (
    <div className="flex h-screen flex-col overflow-hidden font-['Open_Sans','Noto_Sans',sans-serif]">
      <main className="relative flex-1 overflow-hidden bg-[#0078d7]">
        <Wallpaper />
        <div className="relative flex h-[62px] items-center">
          {desktopIcons.map((Icon, i) => (
            <div key={i} className="flex w-[75px] justify-center pr-0.5">
              <Icon />
            </div>
          ))}
        </div>
        <Watermark />
        <Explorer />
        <ScriptDialog place="left-[517px] top-[290px] w-[325px]" title="" />
        <ScriptDialog place="left-[466px] top-[268px] w-[364px]" />
        <ScriptDialog place="left-[516px] top-[312px] w-[352px]" />
        <ScriptDialog place="left-[538px] top-[335px] w-[352px]" />
        <ScriptDialog place="left-[570px] top-[356px] w-[332px]" />
        <ScriptDialog place="left-[589px] top-[379px] w-[337px]" active />
      </main>
      <Taskbar />
    </div>
  )
}
